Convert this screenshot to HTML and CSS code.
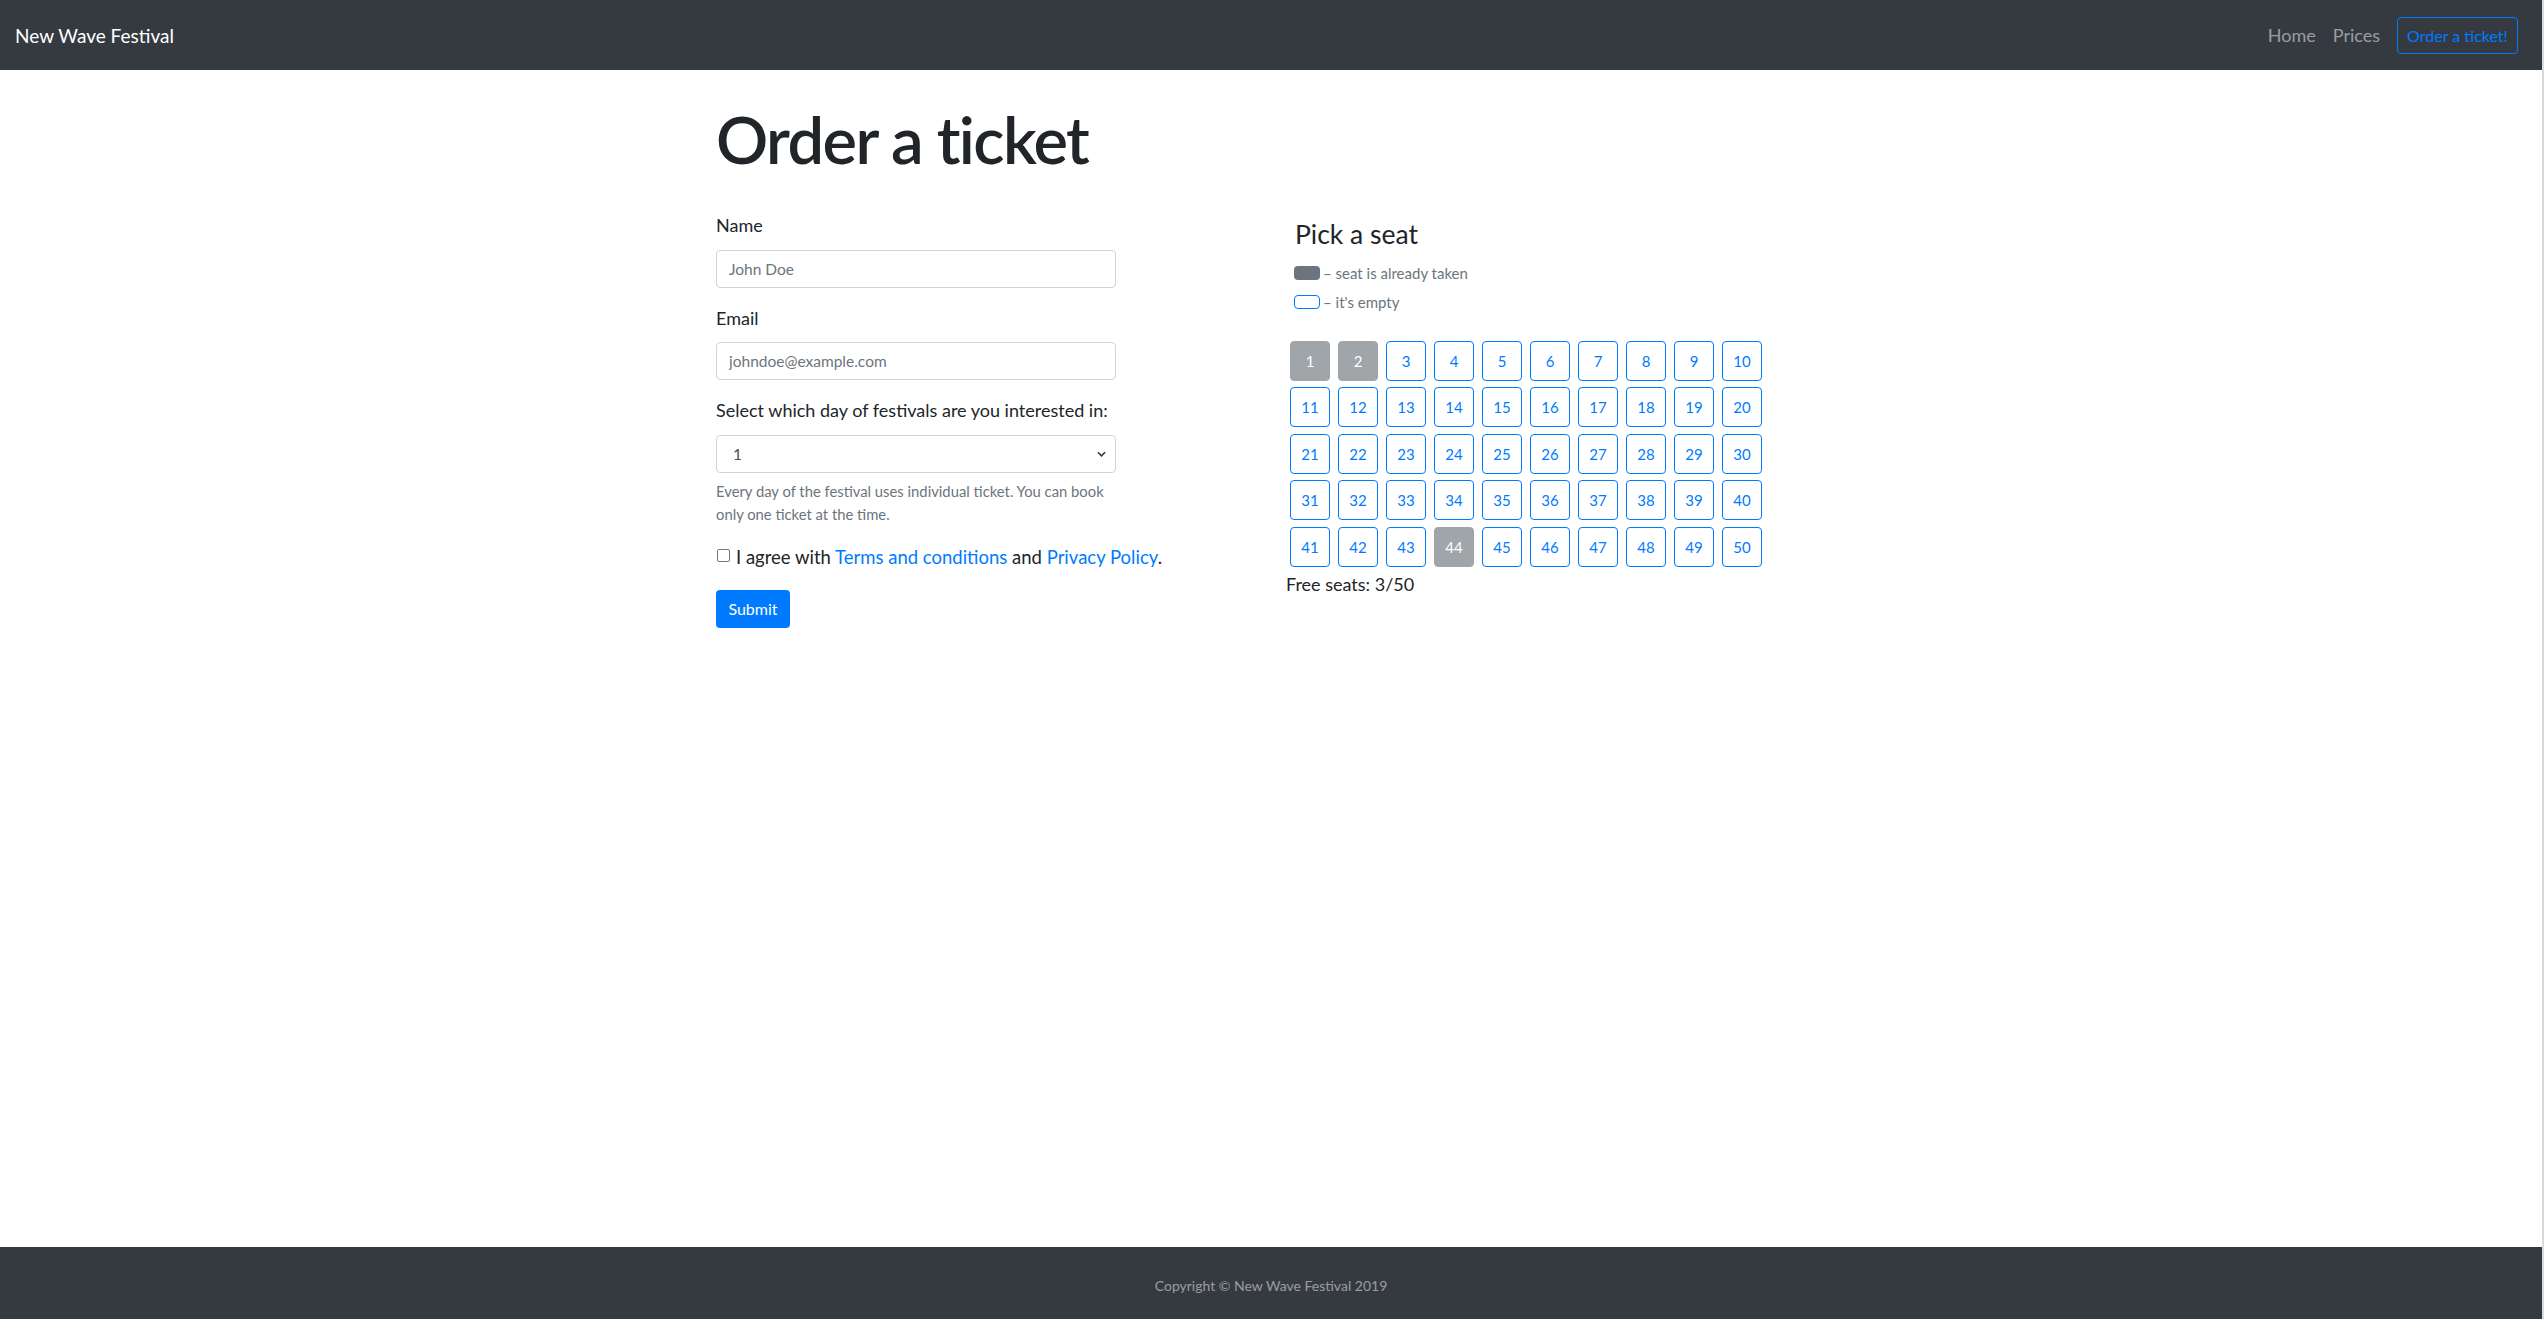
FILE: index.html
```html
<!DOCTYPE html>
<html lang="en">
<head>
<meta charset="utf-8">
<title>New Wave Festival</title>
<link rel="stylesheet" href="styles.css">
</head>
<body>
<div class="page">
  <nav class="navbar">
    <a class="brand" href="#">New Wave Festival</a>
    <div class="nav-links">
      <a class="nav-link" href="#">Home</a>
      <a class="nav-link" href="#">Prices</a>
      <a class="nav-btn" href="#">Order a ticket!</a>
    </div>
  </nav>
  <main class="container">
    <h1 class="title">Order a ticket</h1>
    <div class="row">
      <form class="form-col">
        <div class="group">
          <label class="label">Name</label>
          <input class="control" type="text" placeholder="John Doe">
        </div>
        <div class="group">
          <label class="label">Email</label>
          <input class="control" type="text" placeholder="johndoe@example.com">
        </div>
        <div class="group last">
          <label class="label">Select which day of festivals are you interested in:</label>
          <div class="select">
            <span class="select-value">1</span>
            <svg class="chev" viewBox="0 0 10 6" width="9" height="6"><path d="M1 1l4 4 4-4" fill="none" stroke="#343a40" stroke-width="1.8"/></svg>
          </div>
          <p class="help">Every day of the festival uses individual ticket. You can book only one ticket at the time.</p>
        </div>
        <div class="check">
          <span class="box"></span>
          <span class="check-text">I agree with <a href="#">Terms and conditions</a> and <a href="#">Privacy Policy</a>.</span>
        </div>
        <button class="submit" type="button">Submit</button>
      </form>
      <section class="seat-col">
        <h2 class="seat-title">Pick a seat</h2>
        <div class="legend first"><span class="swatch taken"></span><span>– seat is already taken</span></div>
        <div class="legend"><span class="swatch empty"></span><span>– it's empty</span></div>
        <div class="seats">
          <span class="seat taken">1</span><span class="seat taken">2</span><span class="seat">3</span><span class="seat">4</span><span class="seat">5</span><span class="seat">6</span><span class="seat">7</span><span class="seat">8</span><span class="seat">9</span><span class="seat">10</span>
          <span class="seat">11</span><span class="seat">12</span><span class="seat">13</span><span class="seat">14</span><span class="seat">15</span><span class="seat">16</span><span class="seat">17</span><span class="seat">18</span><span class="seat">19</span><span class="seat">20</span>
          <span class="seat">21</span><span class="seat">22</span><span class="seat">23</span><span class="seat">24</span><span class="seat">25</span><span class="seat">26</span><span class="seat">27</span><span class="seat">28</span><span class="seat">29</span><span class="seat">30</span>
          <span class="seat">31</span><span class="seat">32</span><span class="seat">33</span><span class="seat">34</span><span class="seat">35</span><span class="seat">36</span><span class="seat">37</span><span class="seat">38</span><span class="seat">39</span><span class="seat">40</span>
          <span class="seat">41</span><span class="seat">42</span><span class="seat">43</span><span class="seat taken">44</span><span class="seat">45</span><span class="seat">46</span><span class="seat">47</span><span class="seat">48</span><span class="seat">49</span><span class="seat">50</span>
        </div>
        <p class="free">Free seats: 3/50</p>
      </section>
    </div>
  </main>
  <footer class="footer">Copyright © New Wave Festival 2019</footer>
</div>
</body>
</html>
```
FILE: styles.css
```css
* { box-sizing: border-box; }
html, body { margin: 0; padding: 0; }
body {
  font-family: Lato, "Open Sans", sans-serif;
  color: #212529;
  background: #fff;
}
.page {
  display: flex;
  flex-direction: column;
  min-height: 1319px;
  width: 2544px;
  border-right: 2px solid #dadada;
}
.navbar {
  height: 70px;
  background: #343a40;
  display: flex;
  align-items: center;
  justify-content: space-between;
  padding: 0 24px 0 15px;
}
.brand {
  color: #fff;
  text-decoration: none;
  font-size: 19px;
}
.nav-links { display: flex; align-items: center; }
.nav-link {
  color: rgba(255,255,255,.5);
  text-decoration: none;
  font-size: 18px;
  margin-right: 17px;
}
.nav-btn {
  color: #007bff;
  border: 1px solid #007bff;
  border-radius: 4px;
  text-decoration: none;
  font-size: 16px;
  height: 37px;
  width: 121px;
  display: flex;
  align-items: center;
  justify-content: center;
}
.container {
  flex: 1;
  width: 1110px;
  margin: 0 auto;
}
.title {
  margin: 30px 0 0;
  font-size: 65px;
  font-weight: 600;
  letter-spacing: -1.6px;
  line-height: 1.2;
}
.row { display: flex; margin-top: 37px; }
.form-col { width: 570px; flex: none; }
.seat-col { flex: 1; }
.group { margin-bottom: 20px; }
.group.last { margin-bottom: 0; }
.label {
  display: block;
  font-size: 18px;
  line-height: 1.2;
  margin-bottom: 13px;
}
.control {
  width: 400px;
  height: 38px;
  border: 1px solid #ced4da;
  border-radius: 4px;
  padding: 0 12px;
  font-family: inherit;
  font-size: 15.5px;
  color: #495057;
  display: block;
}
.control::placeholder { color: #6c757d; }
.select {
  width: 400px;
  height: 38px;
  border: 1px solid #ced4da;
  border-radius: 4px;
  padding: 0 9px 0 16px;
  display: flex;
  align-items: center;
  justify-content: space-between;
  font-size: 15.5px;
  color: #495057;
}
.help {
  margin: 7px 0 0;
  width: 400px;
  font-size: 14.8px;
  line-height: 23px;
  color: #6c757d;
}
.check { display: flex; align-items: flex-start; margin-top: 20px; }
.box {
  width: 13px; height: 13px;
  border: 1px solid #767676;
  border-radius: 2px;
  margin: 3px 6px 0 1px;
  flex: none;
}
.check-text { font-size: 18.5px; line-height: 1.2; }
.check-text a { color: #007bff; text-decoration: none; }
.submit {
  margin-top: 22px;
  width: 74px;
  height: 38px;
  background: #007bff;
  border: 0;
  border-radius: 4px;
  color: #fff;
  font-family: inherit;
  font-size: 16px;
  display: block;
  padding: 0;
}
.seat-title {
  margin: 4px 0 0 9px;
  font-size: 26.5px;
  font-weight: 400;
  line-height: 1.2;
}
.legend {
  display: flex;
  align-items: center;
  margin-left: 8px;
  font-size: 15px;
  color: #6c757d;
  height: 28.5px;
}
.legend.first { margin-top: 8.4px; }
.swatch {
  width: 26px; height: 14px;
  border-radius: 4px;
  margin-right: 3px;
  flex: none;
}
.swatch.taken { background: #6c757d; }
.swatch.empty { border: 1px solid #007bff; }
.seats {
  margin: 24.7px 0 0 4px;
  display: grid;
  grid-template-columns: repeat(10, 40px);
  column-gap: 8px;
  row-gap: 6.5px;
}
.seat {
  height: 40px;
  border: 1px solid #007bff;
  border-radius: 4px;
  color: #007bff;
  font-size: 15px;
  display: flex;
  align-items: center;
  justify-content: center;
}
.seat.taken {
  background: #a0a5aa;
  border-color: #a0a5aa;
  color: #fff;
}
.free {
  margin: 7px 0 0;
  font-size: 18px;
  line-height: 1.2;
}
.footer {
  height: 72px;
  background: #343a40;
  color: rgba(255,255,255,.5);
  font-size: 14px;
  display: flex;
  align-items: center;
  justify-content: center;
  padding-top: 5px;
}
```
